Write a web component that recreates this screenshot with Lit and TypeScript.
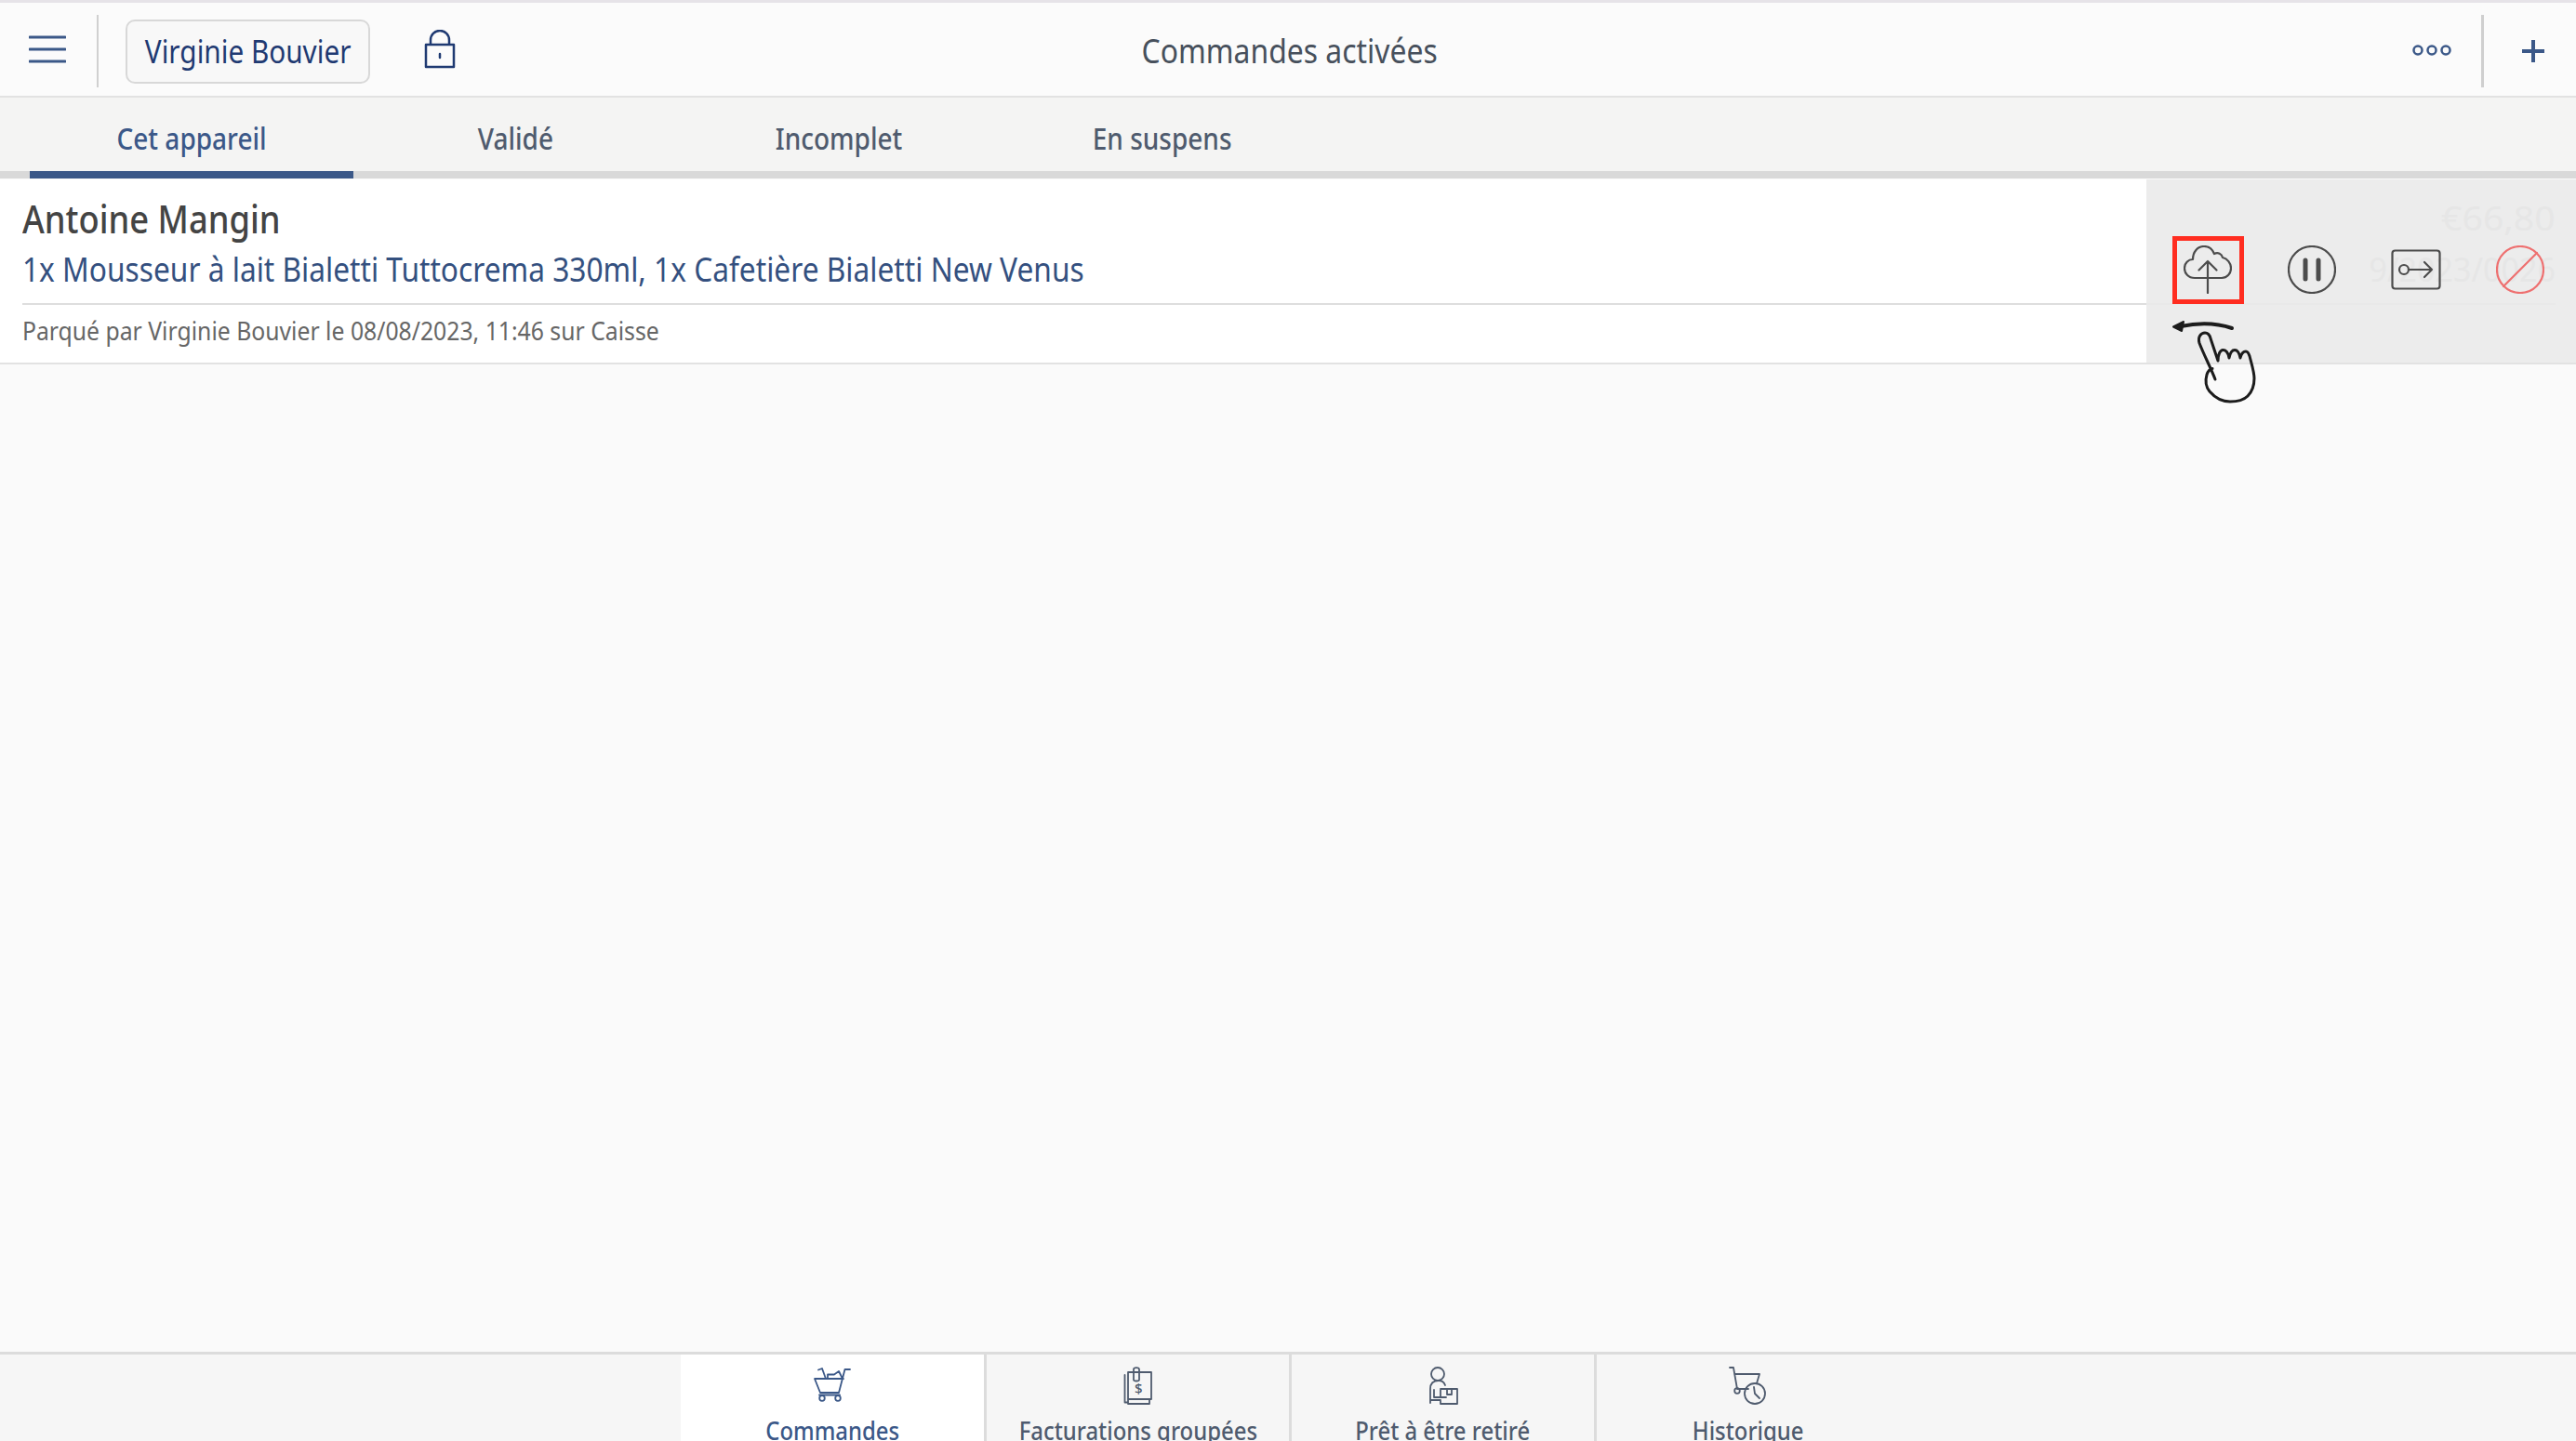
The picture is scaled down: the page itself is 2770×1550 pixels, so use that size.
import { LitElement, html, css, svg } from "lit";
import { customElement } from "lit/decorators.js";

const cloud = svg`<path d="M18 35H12C5 35 1 30 1 24.500C1 19 5 15 10 15C10 7 15 1 22 1C27 1 31 4 33 9C37 7 41 9 42 13C47 14 51 19 51 24.500C51 30 47 35 41 35H18"/><path d="M26 51V17M16.500 26.500L26 17L35.500 26.500"/>`;

@customElement("app-root")
export class AppRoot extends LitElement {
  static styles = css`
    :host { display: block; }
    * { box-sizing: border-box; }
    .page {
      height: 1550px; overflow: hidden; display: flex; flex-direction: column; position: relative;
      background: #fafafa; color: #444;
      font-family: "Noto Sans", sans-serif;
      border-top: 3px solid #e6e3e8;
    }
    svg { display: block; flex: none; fill: none; stroke-linecap: round; stroke-linejoin: round; }
    .c { display: inline-block; white-space: nowrap; transform: scaleX(0.875); }
    .l { transform-origin: left center; }
    .header {
      height: 102px; flex: none; display: grid; grid-template-columns: 1fr auto 1fr; align-items: center;
      background: #fbfbfb; border-bottom: 2px solid #e2e2e2;
    }
    .side { display: flex; align-items: center; }
    .side.end { justify-content: flex-end; }
    .burger { width: 106px; height: 78px; margin-top: 4px; flex: none; padding: 21px 0 0 31px; border-right: 2px solid #d0d0d0; }
    .burger svg { stroke: #3b5888; stroke-width: 3; }
    .user {
      margin: 4px 0 0 29px; width: 263px; height: 69px; flex: none; border: 2px solid #d8d8d8; border-radius: 10px;
      display: flex; align-items: center; justify-content: center;
      background: #f8f8f8; color: #1f3a72; font-size: 34px;
    }
    .lock { margin-left: 58px; flex: none; }
    .lock svg { stroke: #1f3a72; stroke-width: 2.500; }
    .title { font-size: 36px; color: #47505c; padding: 2px 0 0 3px; }
    .title .c { transform: scaleX(0.886); }
    .dots { flex: none; width: 42px; margin: 2px 32px 0 0; }
    .dots svg { stroke: #3b5888; stroke-width: 2.500; }
    .plus { width: 102px; height: 78px; margin-top: 4px; flex: none; border-left: 3px solid #cfcfcf; display: flex; align-items: center; justify-content: center; padding: 0 0 0 6px; }
    .plus svg { stroke: #3b5888; stroke-width: 4; stroke-linecap: butt; }
    .tabs {
      height: 87px; flex: none; display: flex; padding-left: 32px;
      background: #f4f4f3; border-bottom: 8px solid #d9d9d9;
    }
    .tab {
      width: 348px; height: 87px; flex: none; text-align: center; font-size: 32px; line-height: 71px; padding-top: 8px;
      color: #4f5b6e; font-weight: 500; border-bottom: 8px solid transparent;
    }
    .tab.on { color: #3b5888; border-bottom-color: #3b5888; }
    .row {
      margin-top: 1px; height: 199px; flex: none; display: flex; background: #fff;
      border-bottom: 2px solid #e2e2e2;
    }
    .info { flex: 1; min-width: 0; padding-left: 24px; display: flex; flex-direction: column; overflow: hidden; }
    .top { height: 135px; flex: none; border-bottom: 2px solid #dedede; padding-top: 15px; }
    .name { font-size: 42px; line-height: 54px; color: #444; font-weight: 500; }
    .name .c { transform: scaleX(0.865); }
    .items { font-size: 36px; line-height: 50px; color: #34507f; margin-top: 3px; }
    .items .c { transform: scaleX(0.88); }
    .parked { flex: 1; display: flex; align-items: center; font-size: 28px; color: #666; padding-bottom: 9px; }
    .parked .c { transform: scaleX(0.884); }
    .panel {
      width: 462px; flex: none; background: #ececec; position: relative;
      display: flex; align-items: center; padding: 0 0 3px 10px;
    }
    .ghost { position: absolute; right: 22px; color: #e6e6e6; font-size: 37px; line-height: 44px; white-space: nowrap; transform-origin: right center; }
    .g1 { top: 19px; transform: scaleX(1.06); }
    .g2 { top: 74px; transform: scaleX(0.92); }
    .rule { position: absolute; left: 0; right: 22px; top: 133px; height: 2px; background: #e9e9e9; }
    .act { width: 112px; flex: none; display: flex; justify-content: center; position: relative; }
    .act svg { stroke: #4c4c4c; stroke-width: 2.200; }
    .mark { width: 77px; height: 73px; border: 5px solid #ff2d20; display: flex; align-items: center; justify-content: center; }
    .hand { position: absolute; left: 2330px; top: 337px; stroke: #1c1c1c; z-index: 2; }
    .spacer { flex: 1; }
    .bottom {
      height: 96px; flex: none; display: flex; justify-content: center; padding-left: 4px;
      background: #f6f6f6; border-top: 3px solid #dcdcdc;
    }
    .btab {
      width: 328px; flex: none; border-left: 3px solid #dcdcdc;
      display: flex; flex-direction: column; align-items: center; padding-top: 13px;
      color: #4f5b6e; font-size: 27px; font-weight: 500;
    }
    .btab:first-child { border-left: none; width: 326px; }
    .btab.on { background: #fff; color: #3b5888; }
    .btab svg { stroke: currentColor; stroke-width: 1.800; height: 42px; }
    .btab span { margin-top: 9px; line-height: 36px; white-space: nowrap; transform: scaleX(0.885); }
    .dollar { fill: currentColor; stroke: none; font-size: 15px; font-family: "Noto Sans", sans-serif; }
  `;

  render() {
    return html`<div class="page">
      <div class="header">
        <div class="side">
          <div class="burger"><svg width="40" height="32" viewBox="0 0 40 32"><path d="M1 3H39M1 16H39M1 29H39"/></svg></div>
          <div class="user"><span class="c">Virginie Bouvier</span></div>
          <div class="lock"><svg width="34" height="42" viewBox="0 0 34 42"><path d="M2 16H32V40H2ZM7 16V11A10 10 0 0 1 27 11V16M17 26V30"/></svg></div>
        </div>
        <div class="title"><span class="c">Commandes activées</span></div>
        <div class="side end">
          <div class="dots"><svg width="42" height="12" viewBox="0 0 42 12"><circle cx="6" cy="6" r="4.500"/><circle cx="21" cy="6" r="4.500"/><circle cx="36" cy="6" r="4.500"/></svg></div>
          <div class="plus"><svg width="26" height="26" viewBox="0 0 26 26"><path d="M13 1V25M1 13H25"/></svg></div>
        </div>
      </div>
      <div class="tabs">
        <div class="tab on"><span class="c">Cet appareil</span></div>
        <div class="tab"><span class="c">Validé</span></div>
        <div class="tab"><span class="c">Incomplet</span></div>
        <div class="tab"><span class="c">En suspens</span></div>
      </div>
      <div class="row">
        <div class="info">
          <div class="top">
            <div class="name"><span class="c l">Antoine Mangin</span></div>
            <div class="items"><span class="c l">1x Mousseur à lait Bialetti Tuttocrema 330ml, 1x Cafetière Bialetti New Venus</span></div>
          </div>
          <div class="parked"><span class="c l">Parqué par Virginie Bouvier le 08/08/2023, 11:46 sur Caisse</span></div>
        </div>
        <div class="panel">
          <div class="ghost g1">€66,80</div>
          <div class="ghost g2">9/2023/0026</div>
          <div class="rule"></div>
          <div class="act"><div class="mark"><svg width="52" height="52" viewBox="0 0 52 52">${cloud}</svg></div></div>
          <div class="act"><svg width="52" height="52" viewBox="0 0 52 52"><circle cx="26" cy="26" r="25"/><path d="M19 16V36M33 16V36" style="stroke-width:5"/></svg></div>
          <div class="act"><svg width="54" height="44" viewBox="0 0 54 44"><rect x="1.500" y="1.500" width="51" height="41" rx="3"/><circle cx="14" cy="22" r="5"/><path d="M19 22H44M36 14L44 22L36 30"/></svg></div>
          <div class="act"><svg width="52" height="52" viewBox="0 0 52 52" style="stroke:#ee7070"><circle cx="26" cy="26" r="25"/><path d="M8 44L44 8"/></svg></div>
        </div>
      </div>
      <svg class="hand" width="100" height="100" viewBox="0 0 100 100">
        <path d="M70 13C55 8 35 7 15 11" stroke-width="4"/>
        <path d="M7 11.500L18 6L16 16Z" fill="#1c1c1c" stroke-width="2"/>
        <path d="M52 68C47 55 40 42 35 29C33 22 37 18 41 18C44 18 46 20 47 24L55 48C55 42 57 37 60 36.500C63 36 66 39 67 45C68 40 70 36.500 73 36.500C76 36.500 78 40 79 45C80 41 82 38 85 38C87 38 88 40 89 43C91 51 94 60 94 67C94 75 92 81 87 86C83 90 76 92 68 92C60 92 52 88 46 81C42 76 41 70 43 63C44 60 46 57 49 56.500" stroke-width="3"/>
      </svg>
      <div class="spacer"></div>
      <div class="bottom">
        <div class="btab on">
          <svg width="40" height="42" viewBox="0 0 40 42"><path d="M39 3H33.500L27 28H7L1 13H32M6 30.500H28M5 3.500L9 2L13 13M15 13V8.500H22L27 5L31 13"/><circle cx="9" cy="34" r="2.800"/><circle cx="26" cy="34" r="2.800"/></svg>
          <span>Commandes</span>
        </div>
        <div class="btab">
          <svg width="32" height="42" viewBox="0 0 32 42"><path d="M5 6H30V35H5ZM1.500 9V38.500H5M5 35V40H28V35M11 3V14C11 16 17 16 17 14V3C17 0.500 11 0.500 11 3Z"/><text class="dollar" x="12" y="29">$</text></svg>
          <span>Facturations groupées</span>
        </div>
        <div class="btab">
          <svg width="34" height="42" viewBox="0 0 34 42"><circle cx="11" cy="8" r="7"/><path d="M3 39V24C3 18 6 15 12 15C16 15 18 17 19 20M3 36H14M14 25V33H7V25M14 33H20M14 24H32V40H14V37M21 24V30H26V24"/></svg>
          <span>Prêt à être retiré</span>
        </div>
        <div class="btab">
          <svg width="42" height="42" viewBox="0 0 42 42"><path d="M1 1H5L9 24H21M6 8H33L30 18"/><circle cx="9" cy="26" r="2.800"/><circle cx="28" cy="29" r="11"/><path d="M27 22L28 29L33 34"/></svg>
          <span>Historique</span>
        </div>
      </div>
    </div>`;
  }
}
